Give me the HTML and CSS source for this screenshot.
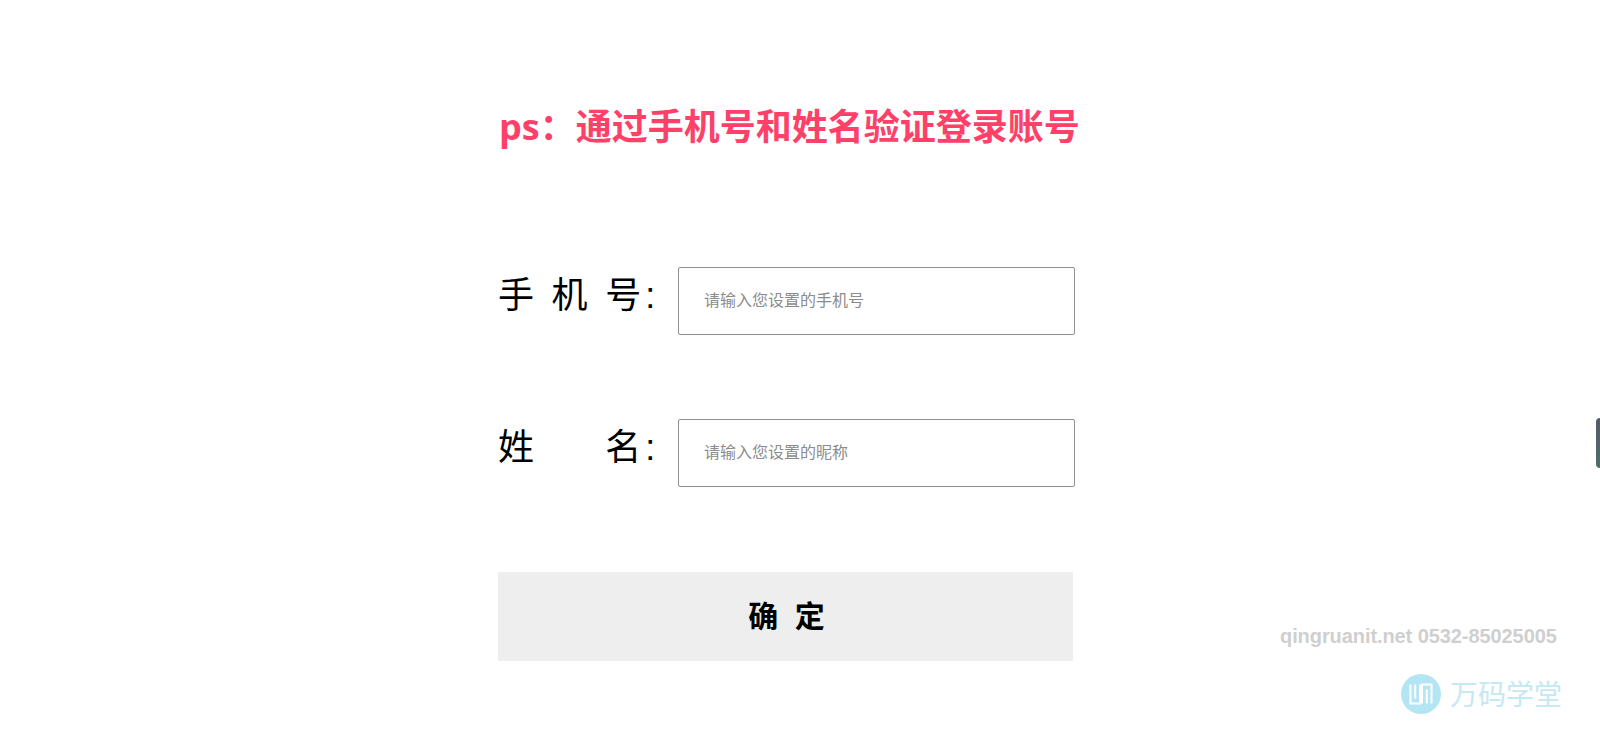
FILE: index.html
```html
<!DOCTYPE html>
<html lang="zh-CN">
<head>
<meta charset="utf-8">
<title>验证登录账号</title>
<link rel="stylesheet" href="styles.css">
</head>
<body>
<main class="panel">
  <h1 class="tip">ps：通过手机号和姓名验证登录账号</h1>
  <form class="form">
    <div class="row">
      <label class="label"><span>手</span><span>机</span><span>号:</span></label>
      <input class="field" type="text" placeholder="请输入您设置的手机号">
    </div>
    <div class="row">
      <label class="label"><span>姓</span><span class="label-end">名:</span></label>
      <input class="field" type="text" placeholder="请输入您设置的昵称">
    </div>
    <button class="submit" type="button">确 定</button>
  </form>
</main>
<div class="edge-tab"></div>
<aside class="watermark">
  <div class="contact">qingruanit.net 0532-85025005</div>
  <div class="brand">
    <svg class="brand-icon" viewBox="0 0 40 40" aria-hidden="true">
      <circle cx="20" cy="20" r="20" fill="#b4e5f3"/>
      <path d="M9.5 10.5V29.5H19V10.5M14.2 10.5V24.5M21 29.5V10.5H30.5V29.5M25.8 29.5V15.5" fill="none" stroke="#fff" stroke-width="2"/>
    </svg>
    <span class="brand-name">万码学堂</span>
  </div>
</aside>
</body>
</html>
```
FILE: styles.css
```css
* { box-sizing: border-box; }
html, body { margin: 0; height: 733px; overflow: hidden; background: #fff; }
body { font-family: "Liberation Sans", "Noto Sans CJK SC", sans-serif; position: relative; }
.panel { width: 577px; margin-left: 498px; padding-top: 105px; }
.tip { margin: 0; padding-left: 1px; font-family: "Open Sans", "Noto Sans CJK SC", sans-serif; font-size: 36px; line-height: 44px; font-weight: 700; color: #ff4069; white-space: nowrap; }
.form { margin-top: 118px; display: flex; flex-direction: column; }
.row { display: flex; align-items: center; height: 68px; margin-bottom: 84px; }
.label { width: 180px; padding-bottom: 11px; display: grid; grid-template-columns: 53.6px 53.6px auto; font-size: 36px; line-height: 44px; letter-spacing: 4px; color: #000; flex: none; white-space: nowrap; }
.label-end { grid-column: 3; }
.field { width: 397px; height: 68px; border: 1px solid #8f8f8f; border-radius: 2px; padding: 0 25px; font-family: "Liberation Sans", "Noto Sans CJK SC", sans-serif; font-size: 16px; outline: none; background: #fff; }
.field::placeholder { color: #8c8c8c; opacity: 1; }
.submit { width: 575px; height: 89px; margin-top: 1px; border: 0; background: #eee; color: #000; font-family: "Liberation Sans", "Noto Sans CJK SC", sans-serif; font-size: 30px; font-weight: 700; word-spacing: 8px; padding: 0 0 6px 2px; }
.edge-tab { position: absolute; right: 0; top: 418px; width: 4px; height: 50px; border-radius: 4px 0 0 4px; background: linear-gradient(#55596a, #4f6f6a); }
.watermark { position: absolute; left: 1280px; top: 623px; width: 300px; }
.contact { font-size: 20px; line-height: 26px; font-weight: 700; letter-spacing: -0.08px; color: #cfcfcf; white-space: nowrap; }
.brand { margin: 23px 0 0 121px; display: flex; align-items: center; gap: 9px; }
.brand-icon { width: 40px; height: 40px; flex: none; }
.brand-name { padding-top: 4px; font-size: 28px; line-height: 40px; color: #c5e8f3; white-space: nowrap; }
```
